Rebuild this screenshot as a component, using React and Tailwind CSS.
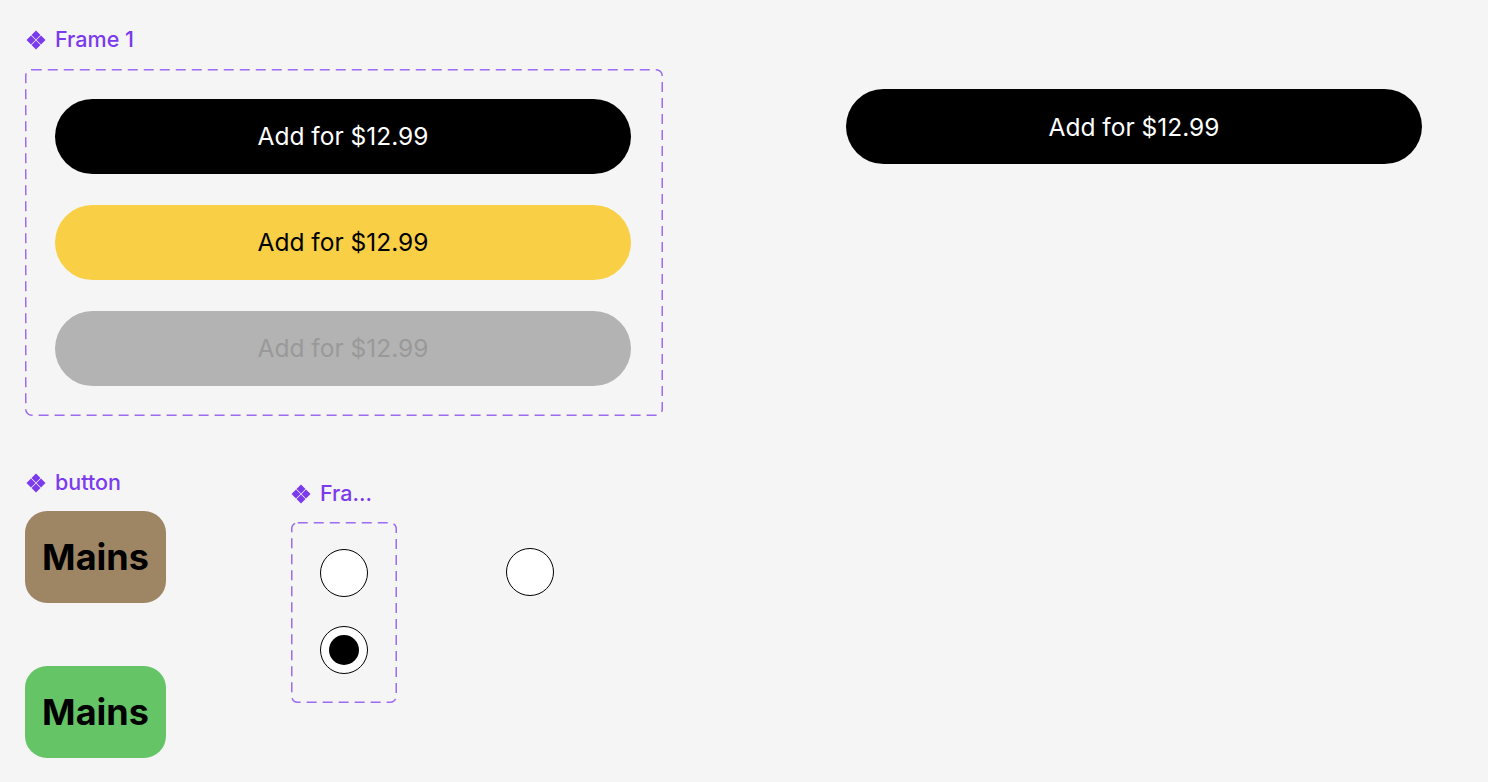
import React from "react";

const font = { fontFamily: "Inter, 'Noto Sans', sans-serif" };

function ComponentIcon() {
  return (
    <svg width="20" height="20" viewBox="0 0 20 20" className="shrink-0">
      <g fill="#7c3aed">
        <path d="M10 0.5 L14.5 5 L10 9.5 L5.5 5 Z" />
        <path d="M10 10.5 L14.5 15 L10 19.5 L5.5 15 Z" />
        <path d="M5 5.5 L9.5 10 L5 14.5 L0.5 10 Z" />
        <path d="M15 5.5 L19.5 10 L15 14.5 L10.5 10 Z" />
      </g>
    </svg>
  );
}

function Label({ children }) {
  return (
    <div className="flex items-center gap-[9px] text-[21.5px] font-medium leading-none text-[#7c3aed]">
      <ComponentIcon />
      <span>{children}</span>
    </div>
  );
}

// dashed outline drawn over the frame so the dash length matches the canvas
function DashedOutline() {
  return (
    <svg className="pointer-events-none absolute inset-0 h-full w-full overflow-visible">
      <rect
        x="0.75"
        y="0.75"
        width="calc(100% - 1.5px)"
        height="calc(100% - 1.5px)"
        rx="6"
        fill="none"
        stroke="#9b6bf2"
        strokeWidth="1.5"
        strokeDasharray="10 6"
      />
    </svg>
  );
}

function PriceButton({ variant = "black" }) {
  const styles = {
    black: "bg-black text-white",
    yellow: "bg-[#f8cf45] text-black",
    gray: "bg-[#b3b3b3] text-[#999999]",
  };
  return (
    <div
      className={`flex h-[75px] w-[576px] items-center justify-center rounded-full pt-[1px] text-[24.5px] ${styles[variant]}`}
    >
      Add for $12.99
    </div>
  );
}

function Mains({ color }) {
  return (
    <div
      className={`flex h-[92px] w-[141px] items-center justify-center rounded-[22px] text-[36px] font-bold text-black ${color}`}
    >
      Mains
    </div>
  );
}

function Radio({ checked }) {
  return (
    <div className="flex h-[48px] w-[48px] items-center justify-center rounded-full border border-black bg-white">
      {checked && <div className="h-[30px] w-[30px] rounded-full bg-black" />}
    </div>
  );
}

export default function App() {
  return (
    <div className="relative h-[782px] w-[1488px] overflow-hidden bg-[#f5f5f5]" style={font}>
      {/* Frame 1 */}
      <div className="absolute left-[26px] top-[29px] flex flex-col gap-[18px]">
        <Label>Frame 1</Label>
        <div className="relative -ml-[1px] flex w-[638px] flex-col gap-[31px] p-[30px]">
          <DashedOutline />
          <PriceButton variant="black" />
          <PriceButton variant="yellow" />
          <PriceButton variant="gray" />
        </div>
      </div>

      {/* standalone button */}
      <div className="absolute left-[846px] top-[89px]">
        <PriceButton variant="black" />
      </div>

      {/* button component */}
      <div className="absolute left-[26px] top-[472px] flex flex-col">
        <Label>button</Label>
        <div className="-ml-[1px] mt-[17px] flex flex-col gap-[63px]">
          <Mains color="bg-[#9e8664]" />
          <Mains color="bg-[#65c466]" />
        </div>
      </div>

      {/* Fra... */}
      <div className="absolute left-[291px] top-[483px] flex flex-col">
        <Label>Fra...</Label>
        <div className="relative mt-[17px] flex h-[181px] w-[106px] flex-col items-center gap-[29px] pt-[27px]">
          <DashedOutline />
          <Radio />
          <Radio checked />
        </div>
      </div>

      {/* loose radio */}
      <div className="absolute left-[506px] top-[548px]">
        <Radio />
      </div>
    </div>
  );
}
